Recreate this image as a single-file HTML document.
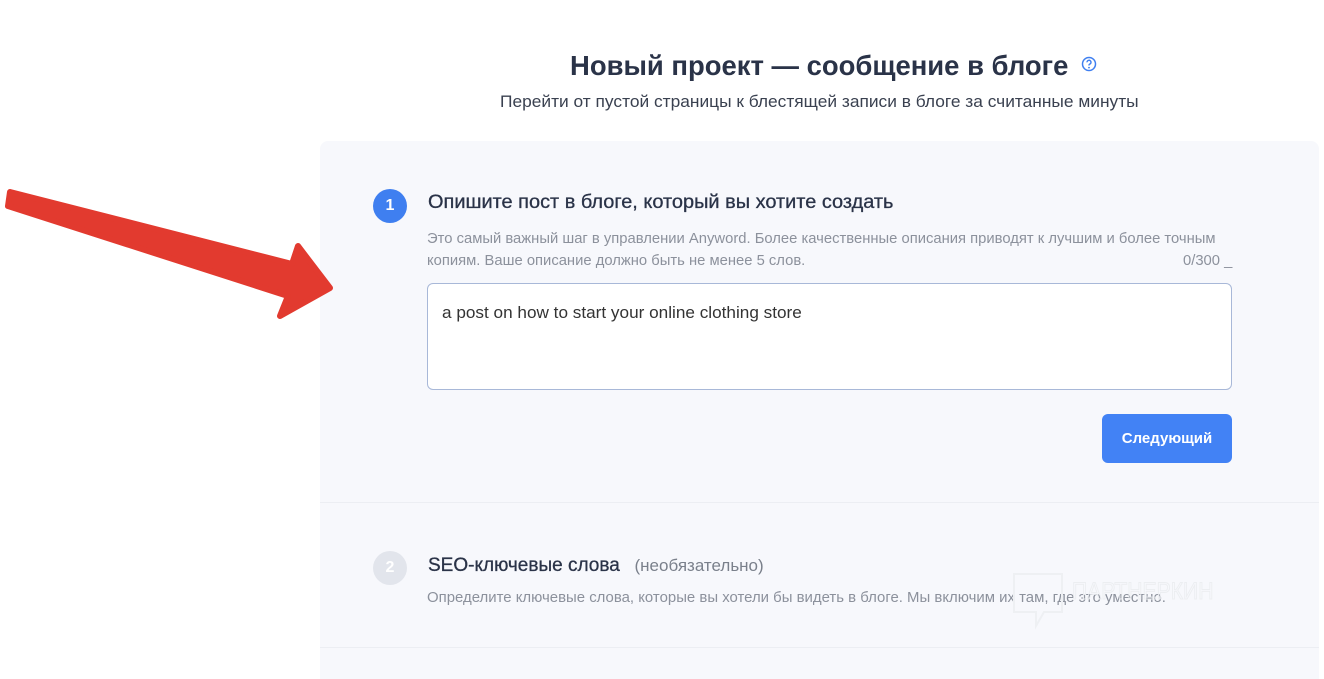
<!DOCTYPE html>
<html><head><meta charset="utf-8"><style>
*{margin:0;padding:0;box-sizing:border-box}
html,body{width:1324px;height:679px;overflow:hidden}
body{background:#fff;font-family:"Liberation Sans","Noto Sans CJK SC",sans-serif;position:relative;color:#2b3445}
.a{position:absolute;white-space:nowrap}
.c{display:inline-block;transform-origin:0 0}
</style></head><body>
<div class="a" style="left:570px;top:50px;font-size:28px;font-weight:bold;color:#2a3348"><span class="c" style="transform:scaleX(0.98)">Новый проект — сообщение в блоге</span></div>
<svg class="a" style="left:1081px;top:56px" width="16" height="16" viewBox="0 0 16 16"><circle cx="8" cy="8" r="6.5" fill="none" stroke="#3f7ff0" stroke-width="1.5"/><path d="M6 6.3a2 2 0 1 1 2.5 1.9c-.4.2-.5.5-.5.9v.4" fill="none" stroke="#3f7ff0" stroke-width="1.4"/><circle cx="8" cy="11.6" r=".9" fill="#3f7ff0"/></svg>
<div class="a" style="left:500px;top:92px;font-size:17px;color:#3a4150"><span class="c" style="transform:scaleX(1.02)">Перейти от пустой страницы к блестящей записи в блоге за считанные минуты</span></div>

<div class="a" style="left:320px;top:141px;width:999px;height:560px;background:#f7f8fc;border-radius:8px"></div>
<div class="a" style="left:320px;top:502px;width:999px;height:1px;background:#eceef3"></div>
<div class="a" style="left:320px;top:647px;width:999px;height:1px;background:#eceef3"></div>

<div class="a" style="left:373px;top:189px;width:34px;height:34px;border-radius:50%;background:#3f7ff0;color:#fff;font-size:16px;font-weight:bold;text-align:center;line-height:34px">1</div>
<div class="a" style="left:428px;top:192px;font-size:19px;color:#2a3348;-webkit-text-stroke:0.3px #2a3348"><span class="c" style="transform:scaleX(1.05)">Опишите пост в блоге, который вы хотите создать</span></div>
<div class="a" style="left:427px;top:228px;font-size:14.5px;color:#8c919c;line-height:22px"><span class="c" style="transform:scaleX(1.02)">Это самый важный шаг в управлении Anyword. Более качественные описания приводят к лучшим и более точным<br>копиям. Ваше описание должно быть не менее 5 слов.</span></div>
<div class="a" style="left:1183px;top:253px;font-size:14.5px;color:#8c919c"><span class="c" style="transform:scaleX(1.02)">0/300 _</span></div>
<div class="a" style="left:427px;top:283px;width:805px;height:107px;background:#fff;border:1px solid #a8b8d8;border-radius:6px"></div>
<div class="a" style="left:442px;top:303px;font-size:17px;color:#333"><span class="c" style="transform:scaleX(1.01)">a post on how to start your online clothing store</span></div>
<div class="a" style="left:1102px;top:414px;width:130px;height:49px;background:#4282f5;border-radius:6px;color:#fff;font-weight:bold;font-size:15px;text-align:center;line-height:49px"><span class="c" style="transform:scaleX(1.0);transform-origin:50% 50%">Следующий</span></div>

<div class="a" style="left:373px;top:551px;width:34px;height:34px;border-radius:50%;background:#e2e5ec;color:#fff;font-size:16px;font-weight:bold;text-align:center;line-height:34px">2</div>
<div class="a" style="left:428px;top:555px;font-size:19px;color:#2a3348;-webkit-text-stroke:0.3px #2a3348"><span class="c" style="transform:scaleX(1.0)">SEO-ключевые слова <span style="color:#7a808b;font-size:17px;-webkit-text-stroke:0">&nbsp; (необязательно)</span></span></div>
<div class="a" style="left:427px;top:590px;font-size:14.5px;color:#8c919c"><span class="c" style="transform:scaleX(1.03)">Определите ключевые слова, которые вы хотели бы видеть в блоге. Мы включим их там, где это уместно.</span></div>
<svg class="a" style="left:1010px;top:570px" width="60" height="60"><path d="M4 4h48v38H34l-8 14v-14H4z" fill="none" stroke="#eef0f3" stroke-width="2"/></svg>
<div class="a" style="left:1072px;top:578px;font-size:24px;color:transparent;-webkit-text-stroke:1px #eceef1"><span class="c" style="transform:scaleX(0.88)">ПАРТНЕРКИН</span></div>

<svg class="a" style="left:0;top:180px" width="340" height="150"><polygon points="10,12 292,84 298,66 330,108 280,136 288,116 8,26" fill="#e23a2f" stroke="#e23a2f" stroke-width="6" stroke-linejoin="round"/></svg>
</body></html>
